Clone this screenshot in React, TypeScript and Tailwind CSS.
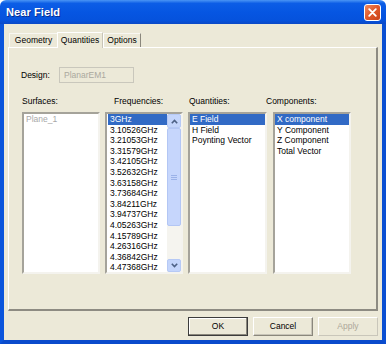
const freqs = [
  '3GHz',
  '3.10526GHz',
  '3.21053GHz',
  '3.31579GHz',
  '3.42105GHz',
  '3.52632GHz',
  '3.63158GHz',
  '3.73684GHz',
  '3.84211GHz',
  '3.94737GHz',
  '4.05263GHz',
  '4.15789GHz',
  '4.26316GHz',
  '4.36842GHz',
  '4.47368GHz',
  '4.57895GHz',
];

const quantities = ['E Field', 'H Field', 'Poynting Vector'];
const components = ['X component', 'Y Component', 'Z Component', 'Total Vector'];

function Item({ text, selected }: { text: string; selected?: boolean }) {
  return (
    <div
      className={`h-[10.6px] leading-[10.6px] pl-[2px] whitespace-nowrap ${
        selected ? 'bg-[#316ac5] text-white' : 'text-black'
      }`}
    >
      {text}
    </div>
  );
}

function ListBox({ children, className = '' }: { children: React.ReactNode; className?: string }) {
  return (
    <div
      className={`h-[162px] bg-white border-2 border-t-[#a5a39a] border-l-[#a5a39a] border-r-[#f4f3ee] border-b-[#f4f3ee] overflow-hidden ${className}`}
    >
      {children}
    </div>
  );
}

function Chevron({ up }: { up?: boolean }) {
  return (
    <svg width="7" height="5" viewBox="0 0 7 5">
      <path
        d={up ? 'M0.8 4.2 L3.5 1.4 L6.2 4.2' : 'M0.8 0.8 L3.5 3.6 L6.2 0.8'}
        fill="none"
        stroke="#4d6185"
        strokeWidth="1.6"
      />
    </svg>
  );
}

function ScrollBar() {
  return (
    <div className="w-[14px] h-full flex flex-col bg-[#f5f4ef]">
      <div className="h-[14px] flex items-center justify-center bg-[#c4d5fb] border border-[#b6c9f5] rounded-[2px]">
        <Chevron up />
      </div>
      <div className="h-[98px] flex items-center justify-center bg-[#c6d6fc] border border-[#b3c6f4] rounded-[2px]">
        <div className="flex flex-col gap-[1px]">
          <div className="w-[6px] h-[1px] bg-[#9bb2e8]" />
          <div className="w-[6px] h-[1px] bg-[#9bb2e8]" />
          <div className="w-[6px] h-[1px] bg-[#9bb2e8]" />
        </div>
      </div>
      <div className="flex-1" />
      <div className="h-[13px] flex items-center justify-center bg-[#c4d5fb] border border-[#b6c9f5] rounded-[2px]">
        <Chevron />
      </div>
    </div>
  );
}

function Button({ label, kind }: { label: string; kind: 'default' | 'normal' | 'disabled' }) {
  const border =
    kind === 'default'
      ? 'border border-[#3c3c3c] shadow-[inset_-1px_-1px_0_#8a877c,inset_1px_1px_0_#ffffff]'
      : kind === 'normal'
      ? 'border border-t-white border-l-white border-r-[#8a877c] border-b-[#8a877c] shadow-[inset_-1px_-1px_0_#c7c4b8]'
      : 'border border-t-white border-l-white border-r-[#c9c6ba] border-b-[#c9c6ba]';
  return (
    <div
      className={`w-[60px] h-[19px] flex items-center justify-center bg-[#ece9d8] ${border} ${
        kind === 'disabled' ? 'text-[#aca899]' : 'text-black'
      }`}
    >
      {label}
    </div>
  );
}

export default function App() {
  return (
    <div
      className="w-[386px] h-[344px] flex flex-col overflow-hidden text-[8.5px] select-none"
      style={{ fontFamily: '"Liberation Sans", Arial, sans-serif' }}
    >
      {/* title bar */}
      <div className="h-[24px] flex items-center justify-between pl-[6px] pr-[5px] bg-[linear-gradient(to_bottom,#4a95f5_0%,#0c5de6_14%,#0656e2_50%,#0552dc_85%,#0b49c6_100%)] rounded-t-[6px]">
        <span className="text-white font-bold text-[11px] tracking-[0.1px] [text-shadow:1px_1px_0_#0a2f8c]">
          Near Field
        </span>
        <div className="w-[17px] h-[17px] flex items-center justify-center rounded-[3px] border border-white bg-[linear-gradient(135deg,#f08a5e_0%,#e0582a_50%,#c8421a_100%)]">
          <svg width="9" height="9" viewBox="0 0 9 9">
            <path d="M1.2 1.2 L7.8 7.8 M7.8 1.2 L1.2 7.8" stroke="#fff" strokeWidth="1.8" strokeLinecap="round" />
          </svg>
        </div>
      </div>

      {/* body */}
      <div className="flex-1 flex flex-col bg-[#ece9d8] border-l-[4px] border-r-[4px] border-b-[4px] border-l-[#0b55dc] border-r-[#0a4fd2] border-b-[#0a4bcc]">
        {/* tabs */}
        <div className="mt-[7px] ml-[5px] h-[16px] flex items-end">
          <div className="h-[14px] w-[48px] flex items-center justify-center text-black border-l border-t border-[#f8f7f2]">
            Geometry
          </div>
          <div className="h-[16px] w-[46px] flex items-center justify-center text-black bg-[#ece9d8] border-l border-t border-r border-t-white border-l-white border-r-[#c8c5b8] relative top-[1px]">
            Quantities
          </div>
          <div className="h-[14px] w-[38px] flex items-center justify-center text-black border-l border-t border-r border-l-white border-t-[#f8f7f2] border-r-[#8a877c]">
            Options
          </div>
        </div>

        {/* panel */}
        <div className="ml-[4px] w-[370px] h-[264px] flex flex-col border-l border-t border-l-white border-t-white border-r-2 border-b-2 border-r-[#8d8b82] border-b-[#8d8b82] pl-[12px] pt-[19px]">
          <div className="h-[16px] flex items-center">
            <span className="w-[38px] text-black">Design:</span>
            <div className="w-[75px] h-[16px] flex items-center pl-[4px] border border-[#c9c7bc] text-[#aaa89e]">
              PlanarEM1
            </div>
          </div>

          <div className="mt-[12px] h-[12px] flex items-center text-black">
            <span className="ml-[1px] w-[92px]">Surfaces:</span>
            <span className="w-[75px]">Frequencies:</span>
            <span className="w-[77px]">Quantities:</span>
            <span>Components:</span>
          </div>

          <div className="mt-[5px] flex gap-[5px] ml-[1px]">
            <ListBox className="w-[78px]">
              <div className="pl-[2px] text-[#a8a8a8] leading-[10.6px]">Plane_1</div>
            </ListBox>
            <ListBox className="w-[78px] flex">
              <div className="flex-1 pl-[1px]">
                {freqs.map((f, i) => (
                  <Item key={f} text={f} selected={i === 0} />
                ))}
              </div>
              <ScrollBar />
            </ListBox>
            <ListBox className="w-[79px]">
              {quantities.map((q, i) => (
                <Item key={q} text={q} selected={i === 0} />
              ))}
            </ListBox>
            <ListBox className="w-[78px] ml-[1px]">
              {components.map((c, i) => (
                <Item key={c} text={c} selected={i === 0} />
              ))}
            </ListBox>
          </div>
        </div>

        {/* buttons */}
        <div className="mt-[6px] flex justify-end gap-[5px] mr-[4px]">
          <Button label="OK" kind="default" />
          <Button label="Cancel" kind="normal" />
          <Button label="Apply" kind="disabled" />
        </div>
      </div>
    </div>
  );
}
